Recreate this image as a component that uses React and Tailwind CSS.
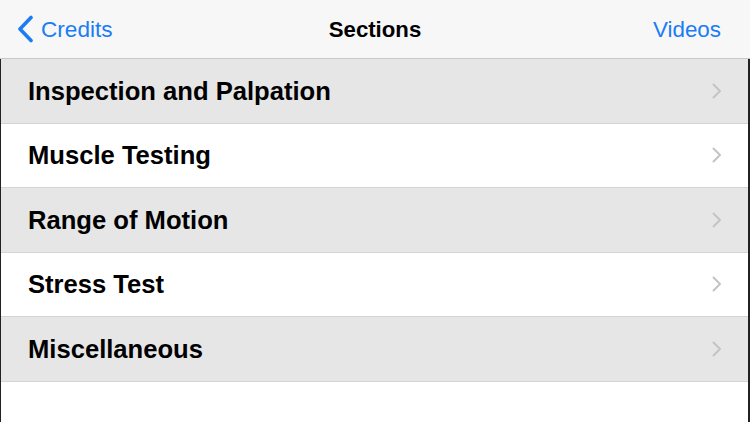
const sections = [
  { name: 'Inspection and Palpation', shaded: true },
  { name: 'Muscle Testing', shaded: false },
  { name: 'Range of Motion', shaded: true },
  { name: 'Stress Test', shaded: false },
  { name: 'Miscellaneous', shaded: true },
];

function Chevron() {
  return (
    <svg width="10" height="16" viewBox="0 0 10 16" fill="none" className="shrink-0">
      <path d="M1.5 1.5 L8 8 L1.5 14.5" stroke="#c4c4c8" strokeWidth="2" strokeLinecap="round" strokeLinejoin="round" />
    </svg>
  );
}

export default function App() {
  return (
    <div
      className="w-[750px] h-[422px] bg-white overflow-hidden flex flex-col"
      style={{ fontFamily: '"Liberation Sans", Arial, sans-serif' }}
    >
      {/* barre de navigation */}
      <div className="h-[59px] shrink-0 bg-[#f7f7f7] border-b border-[#c8c8c8] flex items-center px-[17px] relative">
        <button className="flex items-center gap-[7px] text-[#1b7cf4] text-[22.6px] pt-[1px]">
          <svg width="17" height="28" viewBox="0 0 17 28" fill="none">
            <path d="M14 2.5 L3 14 L14 25.5" stroke="#1b7cf4" strokeWidth="3.6" strokeLinecap="round" strokeLinejoin="round" />
          </svg>
          <span>Credits</span>
        </button>
        <h1 className="absolute left-1/2 -translate-x-1/2 text-[22.2px] font-bold text-black pt-[1px]">Sections</h1>
        <button className="ml-auto mr-[12px] text-[#1b7cf4] text-[22.4px] pt-[1px]">Videos</button>
      </div>

      <div className="flex-1 flex flex-col border-l border-[#222] border-r-2 border-r-[#222]">
        {sections.map((s) => (
          <div
            key={s.name}
            className={`h-[64.5px] shrink-0 flex items-center pl-[27px] pr-[26px] border-b border-[#d4d4d4] ${s.shaded ? 'bg-[#e6e6e6]' : 'bg-white'}`}
          >
            <span className="flex-1 text-[25.6px] font-bold text-black">{s.name}</span>
            <Chevron />
          </div>
        ))}
      </div>
    </div>
  );
}
